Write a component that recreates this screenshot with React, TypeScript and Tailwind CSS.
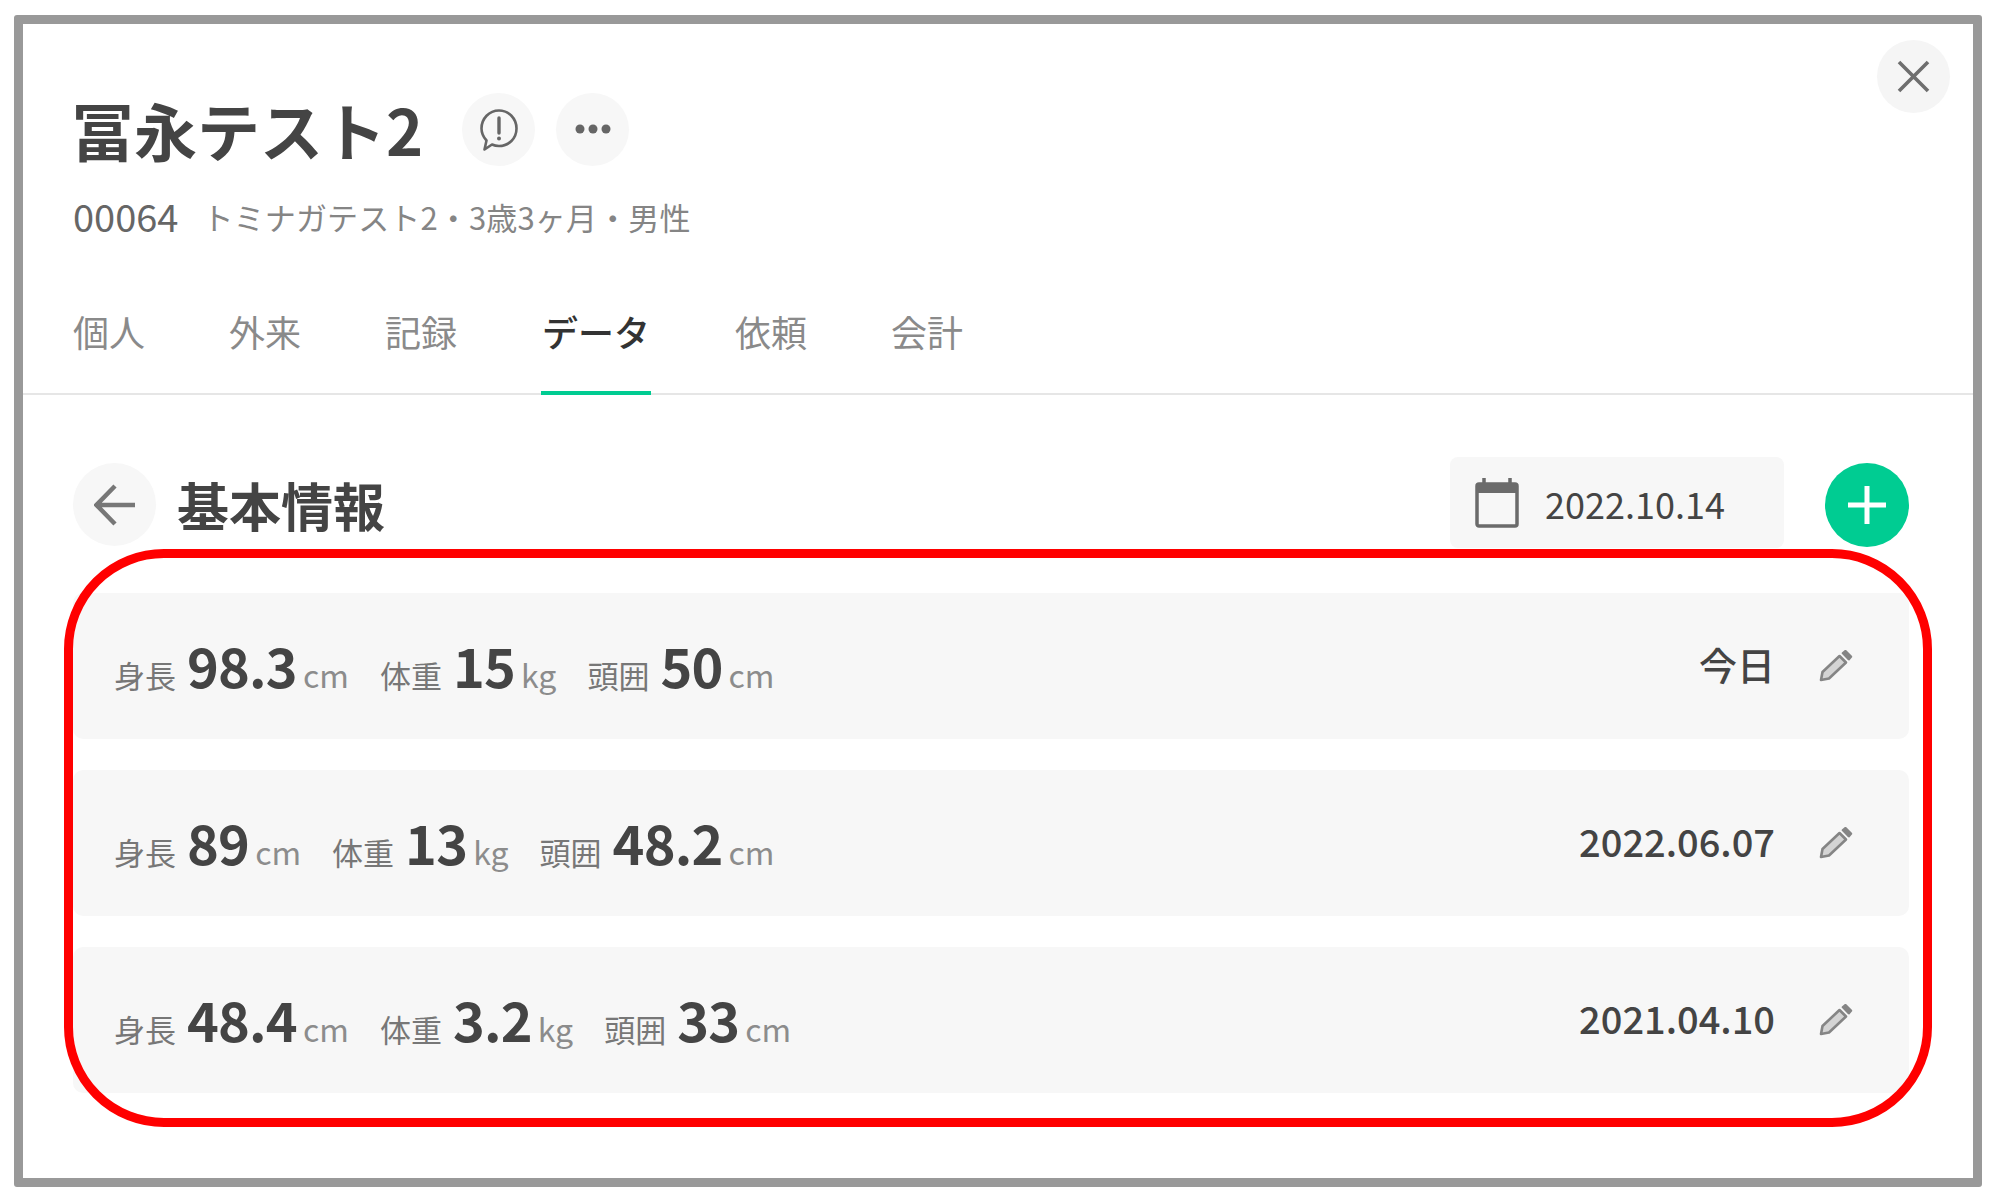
const jp = 'font-["Noto_Sans_CJK_JP","Noto_Sans",sans-serif]';

const tabs = ['個人', '外来', '記録', 'データ', '依頼', '会計'];

const records = [
  { height: '98.3', weight: '15', head: '50', date: '今日' },
  { height: '89', weight: '13', head: '48.2', date: '2022.06.07' },
  { height: '48.4', weight: '3.2', head: '33', date: '2021.04.10' },
];

function Metric({ label, value, unit }: { label: string; value: string; unit: string }) {
  return (
    <div className="flex items-baseline">
      <span className="text-[31px] text-[#777777] leading-none">{label}</span>
      <span className="ml-[11px] text-[54px] font-bold tracking-[-0.8px] text-[#444444] leading-none">{value}</span>
      <span className="ml-[6px] text-[32px] text-[#8c8c8c] leading-none">{unit}</span>
    </div>
  );
}

function PencilIcon() {
  return (
    <svg width="34" height="32" viewBox="0 0 34 32" fill="none" stroke="#858585" strokeWidth="2.6" strokeLinejoin="round">
      {/* body */}
      <path d="M2 30l1.5-8L20.5 6l6.5 6.5L10 28.5z" fill="#d4d4d4" />
      {/* cap */}
      <path d="M24 3.2l2.4-2 5.5 5.5-2.1 2.4z" fill="#858585" />
    </svg>
  );
}

export default function App() {
  return (
    <div className={`${jp} w-[2000px] h-[1203px] bg-white pt-[15px] pl-[14px]`}>
      <div className="relative w-[1968px] h-[1172px] border-[9px] border-[#999999] rounded-[3px] bg-white">
        {/* Header */}
        <div className="flex justify-between pl-[50px] pr-[23px] pt-[16px]">
          <div className="pt-[53px]">
            <div className="flex items-center h-[73px]">
              <h1 className="-ml-[2px] mb-[2px] text-[63px] font-bold text-[#444444] leading-none w-[391px] whitespace-nowrap">冨永テスト2</h1>
              <button className="w-[73px] h-[73px] rounded-full bg-[#f7f7f7] flex items-center justify-center">
                <svg width="40" height="44" viewBox="0 0 40 44" fill="none" stroke="#666666" strokeWidth="2.6" strokeLinejoin="round">
                  <path d="M20 2.5c9.8 0 17.5 8 17.5 18S29.800 38 20 38c-2.500 0-4.800-.5-7-1.500L5.500 41.500 7.500 32.500C4.300 29 2.500 25 2.500 20.500c0-10 7.700-18 17.500-18z" />
                  <path d="M20 10v15" strokeWidth="3.400" strokeLinecap="round" />
                  <circle cx="20" cy="30.500" r="2" fill="#666666" stroke="none" />
                </svg>
              </button>
              <button className="ml-[21px] w-[73px] h-[73px] rounded-full bg-[#f7f7f7] flex items-center justify-center">
                <svg className="-mt-[2px]" width="36" height="10" viewBox="0 0 36 10" fill="#666666">
                  <circle cx="5" cy="5" r="4.500" />
                  <circle cx="18" cy="5" r="4.500" />
                  <circle cx="31" cy="5" r="4.500" />
                </svg>
              </button>
            </div>
            <div className="mt-[30px] flex items-center h-[40px] whitespace-nowrap">
              <span className="text-[38px] text-[#666666] leading-none">00064</span>
              <span className="ml-[24px] text-[31px] tracking-[0.15px] text-[#858585] leading-none">トミナガテスト2・3歳3ヶ月・男性</span>
            </div>
          </div>
          <button className="w-[73px] h-[73px] rounded-full bg-[#f5f5f5] flex items-center justify-center">
            <svg width="33" height="33" viewBox="0 0 33 33" stroke="#6e6e6e" strokeWidth="3.600" fill="none">
              <path d="M2 2l29 29M31 2L2 31" />
            </svg>
          </button>
        </div>

        {/* Tabs */}
        <div className="mt-[33px] pl-[50px] flex gap-[84px] border-b-2 border-[#e6e6e6] h-[126px]">
          {tabs.map((tab) => (
            <div
              key={tab}
              className={
                tab === 'データ'
                  ? 'w-[110px] text-center h-[126px] pt-[37px] border-b-4 border-[#00cc92] text-[36px] font-medium text-[#333333] leading-[50px] whitespace-nowrap'
                  : 'h-[126px] pt-[37px] text-[36px] text-[#8a8a8a] leading-[50px] whitespace-nowrap'
              }
            >
              {tab}
            </div>
          ))}
        </div>

        {/* Section title */}
        <div className="mt-[62px] pl-[50px] pr-[64px] flex items-start">
          <button className="mt-[6px] w-[83px] h-[83px] rounded-full bg-[#f7f7f7] flex items-center justify-center">
            <svg width="42" height="42" viewBox="0 0 42 42" stroke="#777777" strokeWidth="4.500" fill="none">
              <path d="M41 21H3M21 2L2.500 21 21 40" />
            </svg>
          </button>
          <h2 className="ml-[21px] mt-[13px] text-[52px] font-bold text-[#444444] leading-[70px] whitespace-nowrap">基本情報</h2>
          <div className="ml-auto w-[334px] h-[91px] rounded-[8px] bg-[#f7f7f7] pl-[25px] flex items-center">
            <svg width="44" height="50" viewBox="0 0 44 50" fill="none">
              <path d="M9 0v8M35 0v8" stroke="#6b6b6b" strokeWidth="3.500" />
              <rect x="2" y="6" width="40" height="42" rx="2" stroke="#6b6b6b" strokeWidth="3.500" />
              <rect x="2" y="6" width="40" height="9" fill="#6b6b6b" />
            </svg>
            <span className="ml-[26px] text-[36px] text-[#444444] leading-none">2022.10.14</span>
          </div>
          <button className="ml-[41px] mt-[6px] w-[84px] h-[84px] rounded-full bg-[#00cc92] flex items-center justify-center">
            <svg width="40" height="40" viewBox="0 0 40 40" stroke="#ffffff" strokeWidth="5" fill="none">
              <path d="M20 1v38M1 20h38" />
            </svg>
          </button>
        </div>

        {/* Records */}
        <div className="mt-[45px] pl-[50px] pr-[64px] flex flex-col gap-[31px]">
          {records.map((r) => (
            <div key={r.date} className="h-[146px] rounded-[10px] bg-[#f7f7f7] pl-[41px] pr-[56px] flex items-center justify-between">
              <div className="flex items-baseline gap-[31px] pb-[2px]">
                <Metric label="身長" value={r.height} unit="cm" />
                <Metric label="体重" value={r.weight} unit="kg" />
                <Metric label="頭囲" value={r.head} unit="cm" />
              </div>
              <div className="flex items-center">
                <span className="mb-[4px] text-[38px] font-medium text-[#444444] leading-none">{r.date}</span>
                <span className="ml-[44px] flex">
                  <PencilIcon />
                </span>
              </div>
            </div>
          ))}
        </div>

        {/* Red annotation */}
        <div className="absolute left-[41px] top-[525px] w-[1868px] h-[578px] border-[9px] border-[#ff0000] rounded-[100px] pointer-events-none" />
      </div>
    </div>
  );
}
